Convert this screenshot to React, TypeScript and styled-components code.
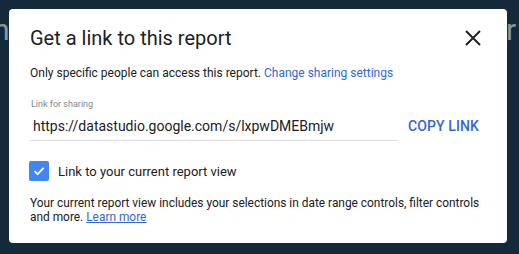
import React from 'react';
import styled, { createGlobalStyle } from 'styled-components';

const GlobalStyle = createGlobalStyle`
	html, body {
		margin: 0;
		padding: 0;
		background: #14293a;
	}
	body {
		font-family: Roboto, 'Liberation Sans', Arial, sans-serif;
		-webkit-font-smoothing: antialiased;
	}
`;

const Backdrop = styled.div`
	position: relative;
	width: 519px;
	height: 254px;
	padding: 9px;
	box-sizing: border-box;
	background: #14293a;
	overflow: hidden;
`;

// letters of the page heading showing through behind the modal
const GhostLetter = styled.span<{ $left: number }>`
	position: absolute;
	top: 12px;
	left: ${(props) => props.$left}px;
	font-size: 30px;
	line-height: 36px;
	color: #8c959c;
`;

const Dialog = styled.div`
	position: relative;
	width: 498px;
	height: 234px;
	box-sizing: border-box;
	padding: 17px 22px 0 21px;
	background: #fff;
	border-radius: 4px;
	color: #202124;
`;

const Header = styled.div`
	display: flex;
	align-items: center;
	justify-content: space-between;
`;

const Title = styled.h1`
	margin: 0;
	font-size: 20px;
	line-height: 24px;
	font-weight: 400;
	color: #202124;
`;

const CloseButton = styled.button`
	display: flex;
	align-items: center;
	justify-content: center;
	width: 24px;
	height: 24px;
	padding: 0;
	border: none;
	background: none;
	cursor: pointer;
	color: #202124;
`;

const Note = styled.p`
	margin: 15px 0 0;
	font-size: 12px;
	line-height: 16px;
	color: #202124;
`;

const Link = styled.a<{ $underline?: boolean }>`
	color: #3367d6;
	text-decoration: ${(props) => (props.$underline ? 'underline' : 'none')};
`;

const FieldRow = styled.div`
	display: flex;
	align-items: flex-end;
	margin-top: 17px;
`;

const Field = styled.div`
	flex: 0 0 368px;
	border-bottom: 1px solid #dadce0;
	padding-bottom: 5px;
`;

const FieldLabel = styled.div`
	padding-left: 1px;
	font-size: 9px;
	line-height: 12px;
	color: #80868b;
`;

const FieldValue = styled.div`
	margin-top: 7px;
	padding-left: 3px;
	font-size: 14px;
	line-height: 18px;
	color: #202124;
`;

const CopyButton = styled.button`
	margin: 0 0 6px 10px;
	padding: 0;
	border: none;
	background: none;
	font-family: inherit;
	font-size: 14px;
	font-weight: 500;
	line-height: 18px;
	letter-spacing: 0.1px;
	color: #3367d6;
	cursor: pointer;
`;

const CheckRow = styled.label`
	display: flex;
	align-items: center;
	gap: 9px;
	margin-top: 20px;
	font-size: 13px;
	color: #202124;
`;

const Box = styled.span`
	display: flex;
	align-items: center;
	justify-content: center;
	width: 20px;
	height: 20px;
	margin-left: -1px;
	border-radius: 2px;
	background: #4285f4;
`;

const Details = styled.p`
	margin: 15px 0 0;
	font-size: 11.9px;
	line-height: 14px;
	color: #202124;
`;

export default function App() {
	return (
		<>
			<GlobalStyle />
			<Backdrop>
				<GhostLetter $left={-7}>n</GhostLetter>
				<GhostLetter $left={506}>r</GhostLetter>
				<Dialog role="dialog" aria-label="Get a link to this report">
					<Header>
						<Title>Get a link to this report</Title>
						<CloseButton aria-label="Close">
							<svg width="16" height="16" viewBox="0 0 16 16">
								<path d="M1 1L15 15M15 1L1 15" stroke="currentColor" strokeWidth="2" />
							</svg>
						</CloseButton>
					</Header>
					<Note>
						Only specific people can access this report. <Link href="#">Change sharing settings</Link>
					</Note>
					<FieldRow>
						<Field>
							<FieldLabel>Link for sharing</FieldLabel>
							<FieldValue>https://datastudio.google.com/s/lxpwDMEBmjw</FieldValue>
						</Field>
						<CopyButton>COPY LINK</CopyButton>
					</FieldRow>
					<CheckRow>
						<Box>
							<svg width="14" height="14" viewBox="0 0 14 14">
								<path d="M2.5 7.2L5.6 10.2L11.6 3.8" fill="none" stroke="#fff" strokeWidth="1.8" />
							</svg>
						</Box>
						Link to your current report view
					</CheckRow>
					<Details>
						Your current report view includes your selections in date range controls, filter controls and more.{' '}
						<Link href="#" $underline>
							Learn more
						</Link>
					</Details>
				</Dialog>
			</Backdrop>
		</>
	);
}
